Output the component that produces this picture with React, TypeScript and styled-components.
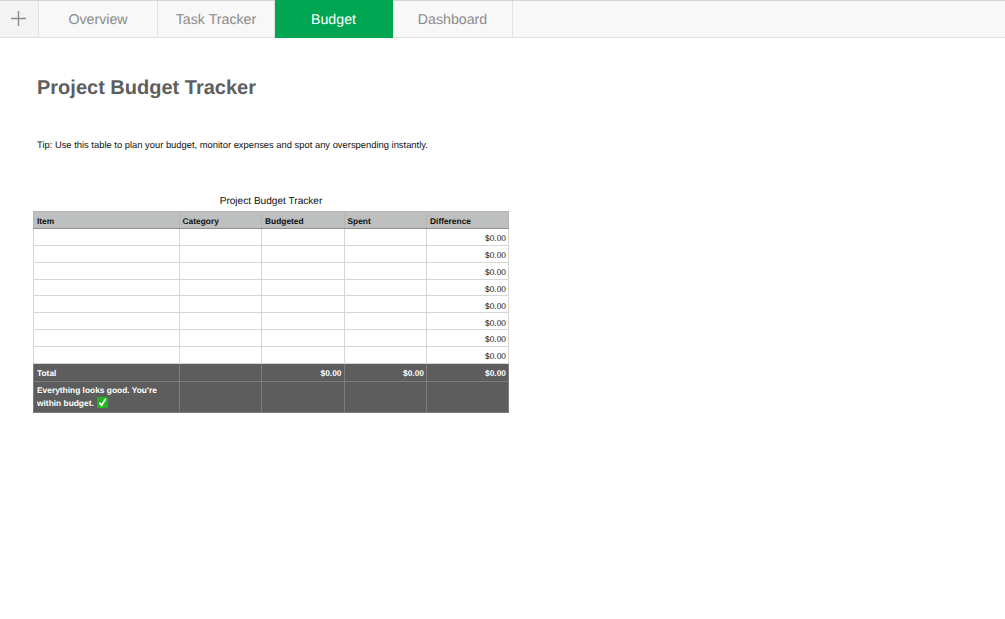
import React from "react";
import styled, { createGlobalStyle } from "styled-components";

const Global = createGlobalStyle`
  html, body { margin: 0; padding: 0; background: #fff; }
  body { font-family: "Liberation Sans", Arial, sans-serif; text-rendering: geometricPrecision; }
`;

const Page = styled.div`
  width: 1005px;
  min-height: 619px;
  background: #fff;
  overflow: hidden;
`;

const TabBar = styled.nav`
  display: flex;
  height: 38px;
  box-sizing: border-box;
  background: #f8f8f8;
  border-top: 1px solid #d4d4d4;
  border-bottom: 1px solid #e2e2e2;
`;

const AddButton = styled.div`
  width: 39px;
  display: flex;
  align-items: center;
  justify-content: center;
  box-sizing: border-box;
  padding: 0 1px 1px 0;
  background: #f3f3f3;
  border-right: 1px solid #e2e2e2;
`;

const Tab = styled.div<{ $active?: boolean; $width: number }>`
  width: ${(p) => p.$width}px;
  box-sizing: border-box;
  display: flex;
  align-items: center;
  justify-content: center;
  padding-top: 2px;
  font-size: 14.2px;
  color: ${(p) => (p.$active ? "#ffffff" : "#8a8a8a")};
  background: ${(p) => (p.$active ? "#00a651" : "transparent")};
  border-right: 1px solid ${(p) => (p.$active ? "#00a651" : "#e2e2e2")};
  margin-bottom: ${(p) => (p.$active ? "-1px" : "0")};
  margin-top: ${(p) => (p.$active ? "-1px" : "0")};
`;

const Content = styled.main`
  padding: 37px 0 0 33px;
`;

const Title = styled.h1`
  margin: 0 0 0 4px;
  font-size: 20px;
  line-height: 26px;
  font-weight: 700;
  color: #5e5e5e;
`;

const Tip = styled.p`
  margin: 37px 0 0 4px;
  font-size: 9.4px;
  line-height: 14px;
  color: #111;
`;

const Caption = styled.div`
  width: 476px;
  margin-top: 43px;
  text-align: center;
  font-size: 10.1px;
  line-height: 13px;
  color: #111;
`;

const Table = styled.table`
  margin-top: 3px;
  width: 475px;
  table-layout: fixed;
  border-collapse: collapse;
  font-size: 8.4px;
  color: #111;
`;

const Head = styled.th`
  height: 17px;
  padding: 1px 3px 0 3px;
  box-sizing: border-box;
  background: #bdc0bf;
  text-align: left;
  font-weight: 700;
  border: 1px solid #b4b6b5;
  border-bottom: 1.5px solid #8f9190;
`;

const Cell = styled.td<{ $right?: boolean }>`
  height: 16.85px;
  padding: 3px 2px 0 3px;
  box-sizing: border-box;
  text-align: ${(p) => (p.$right ? "right" : "left")};
  border: 1px solid #d6d6d6;
  color: #111;
`;

const DarkCell = styled.td<{ $right?: boolean; $height: number }>`
  height: ${(p) => p.$height}px;
  padding: 1px 2px 0 3px;
  box-sizing: border-box;
  background: #5d5d5d;
  color: #fff;
  font-weight: 700;
  text-align: ${(p) => (p.$right ? "right" : "left")};
  border: 1px solid #7d7d7d;
  line-height: 13px;
`;

const TotalCell = styled(DarkCell)`
  padding-top: 3px;
`;

const CheckBadge = styled.svg`
  width: 11px;
  height: 11px;
  vertical-align: -2px;
  margin-left: 1px;
`;

const tabs = [
  { label: "Overview", width: 119 },
  { label: "Task Tracker", width: 117 },
  { label: "Budget", width: 118, active: true },
  { label: "Dashboard", width: 120 },
];

const widths = [145.5, 82.5, 82.5, 82.5, 82];
const heads = ["Item", "Category", "Budgeted", "Spent", "Difference"];

export default function App() {
  return (
    <Page>
      <Global />
      <TabBar>
        <AddButton>
          <svg width="15" height="15" viewBox="0 0 15 15">
            <path d="M7.5 0v15M0 7.5h15" stroke="#8c8c8c" strokeWidth="1.4" fill="none" />
          </svg>
        </AddButton>
        {tabs.map((t) => (
          <Tab key={t.label} $width={t.width} $active={t.active}>
            {t.label}
          </Tab>
        ))}
      </TabBar>
      <Content>
        <Title>Project Budget Tracker</Title>
        <Tip>Tip: Use this table to plan your budget, monitor expenses and spot any overspending instantly.</Tip>
        <Caption>Project Budget Tracker</Caption>
        <Table>
          <colgroup>
            {widths.map((w, i) => (
              <col key={i} style={{ width: w }} />
            ))}
          </colgroup>
          <thead>
            <tr>
              {heads.map((h) => (
                <Head key={h}>{h}</Head>
              ))}
            </tr>
          </thead>
          <tbody>
            {Array.from({ length: 8 }).map((_, r) => (
              <tr key={r}>
                <Cell />
                <Cell />
                <Cell />
                <Cell />
                <Cell $right>$0.00</Cell>
              </tr>
            ))}
            <tr>
              <TotalCell $height={18}>Total</TotalCell>
              <TotalCell $height={18} />
              <TotalCell $height={18} $right>$0.00</TotalCell>
              <TotalCell $height={18} $right>$0.00</TotalCell>
              <TotalCell $height={18} $right>$0.00</TotalCell>
            </tr>
            <tr>
              <DarkCell $height={31}>
                Everything looks good. You're within budget.{" "}
                <CheckBadge viewBox="0 0 11 11">
                  <rect width="11" height="11" rx="1.5" fill="#1fb51f" />
                  <path d="M2.4 5.6 4.6 8.2 8.8 1.6" stroke="#fff" strokeWidth="1.7" fill="none" />
                </CheckBadge>
              </DarkCell>
              <DarkCell $height={31} />
              <DarkCell $height={31} />
              <DarkCell $height={31} />
              <DarkCell $height={31} />
            </tr>
          </tbody>
        </Table>
      </Content>
    </Page>
  );
}
